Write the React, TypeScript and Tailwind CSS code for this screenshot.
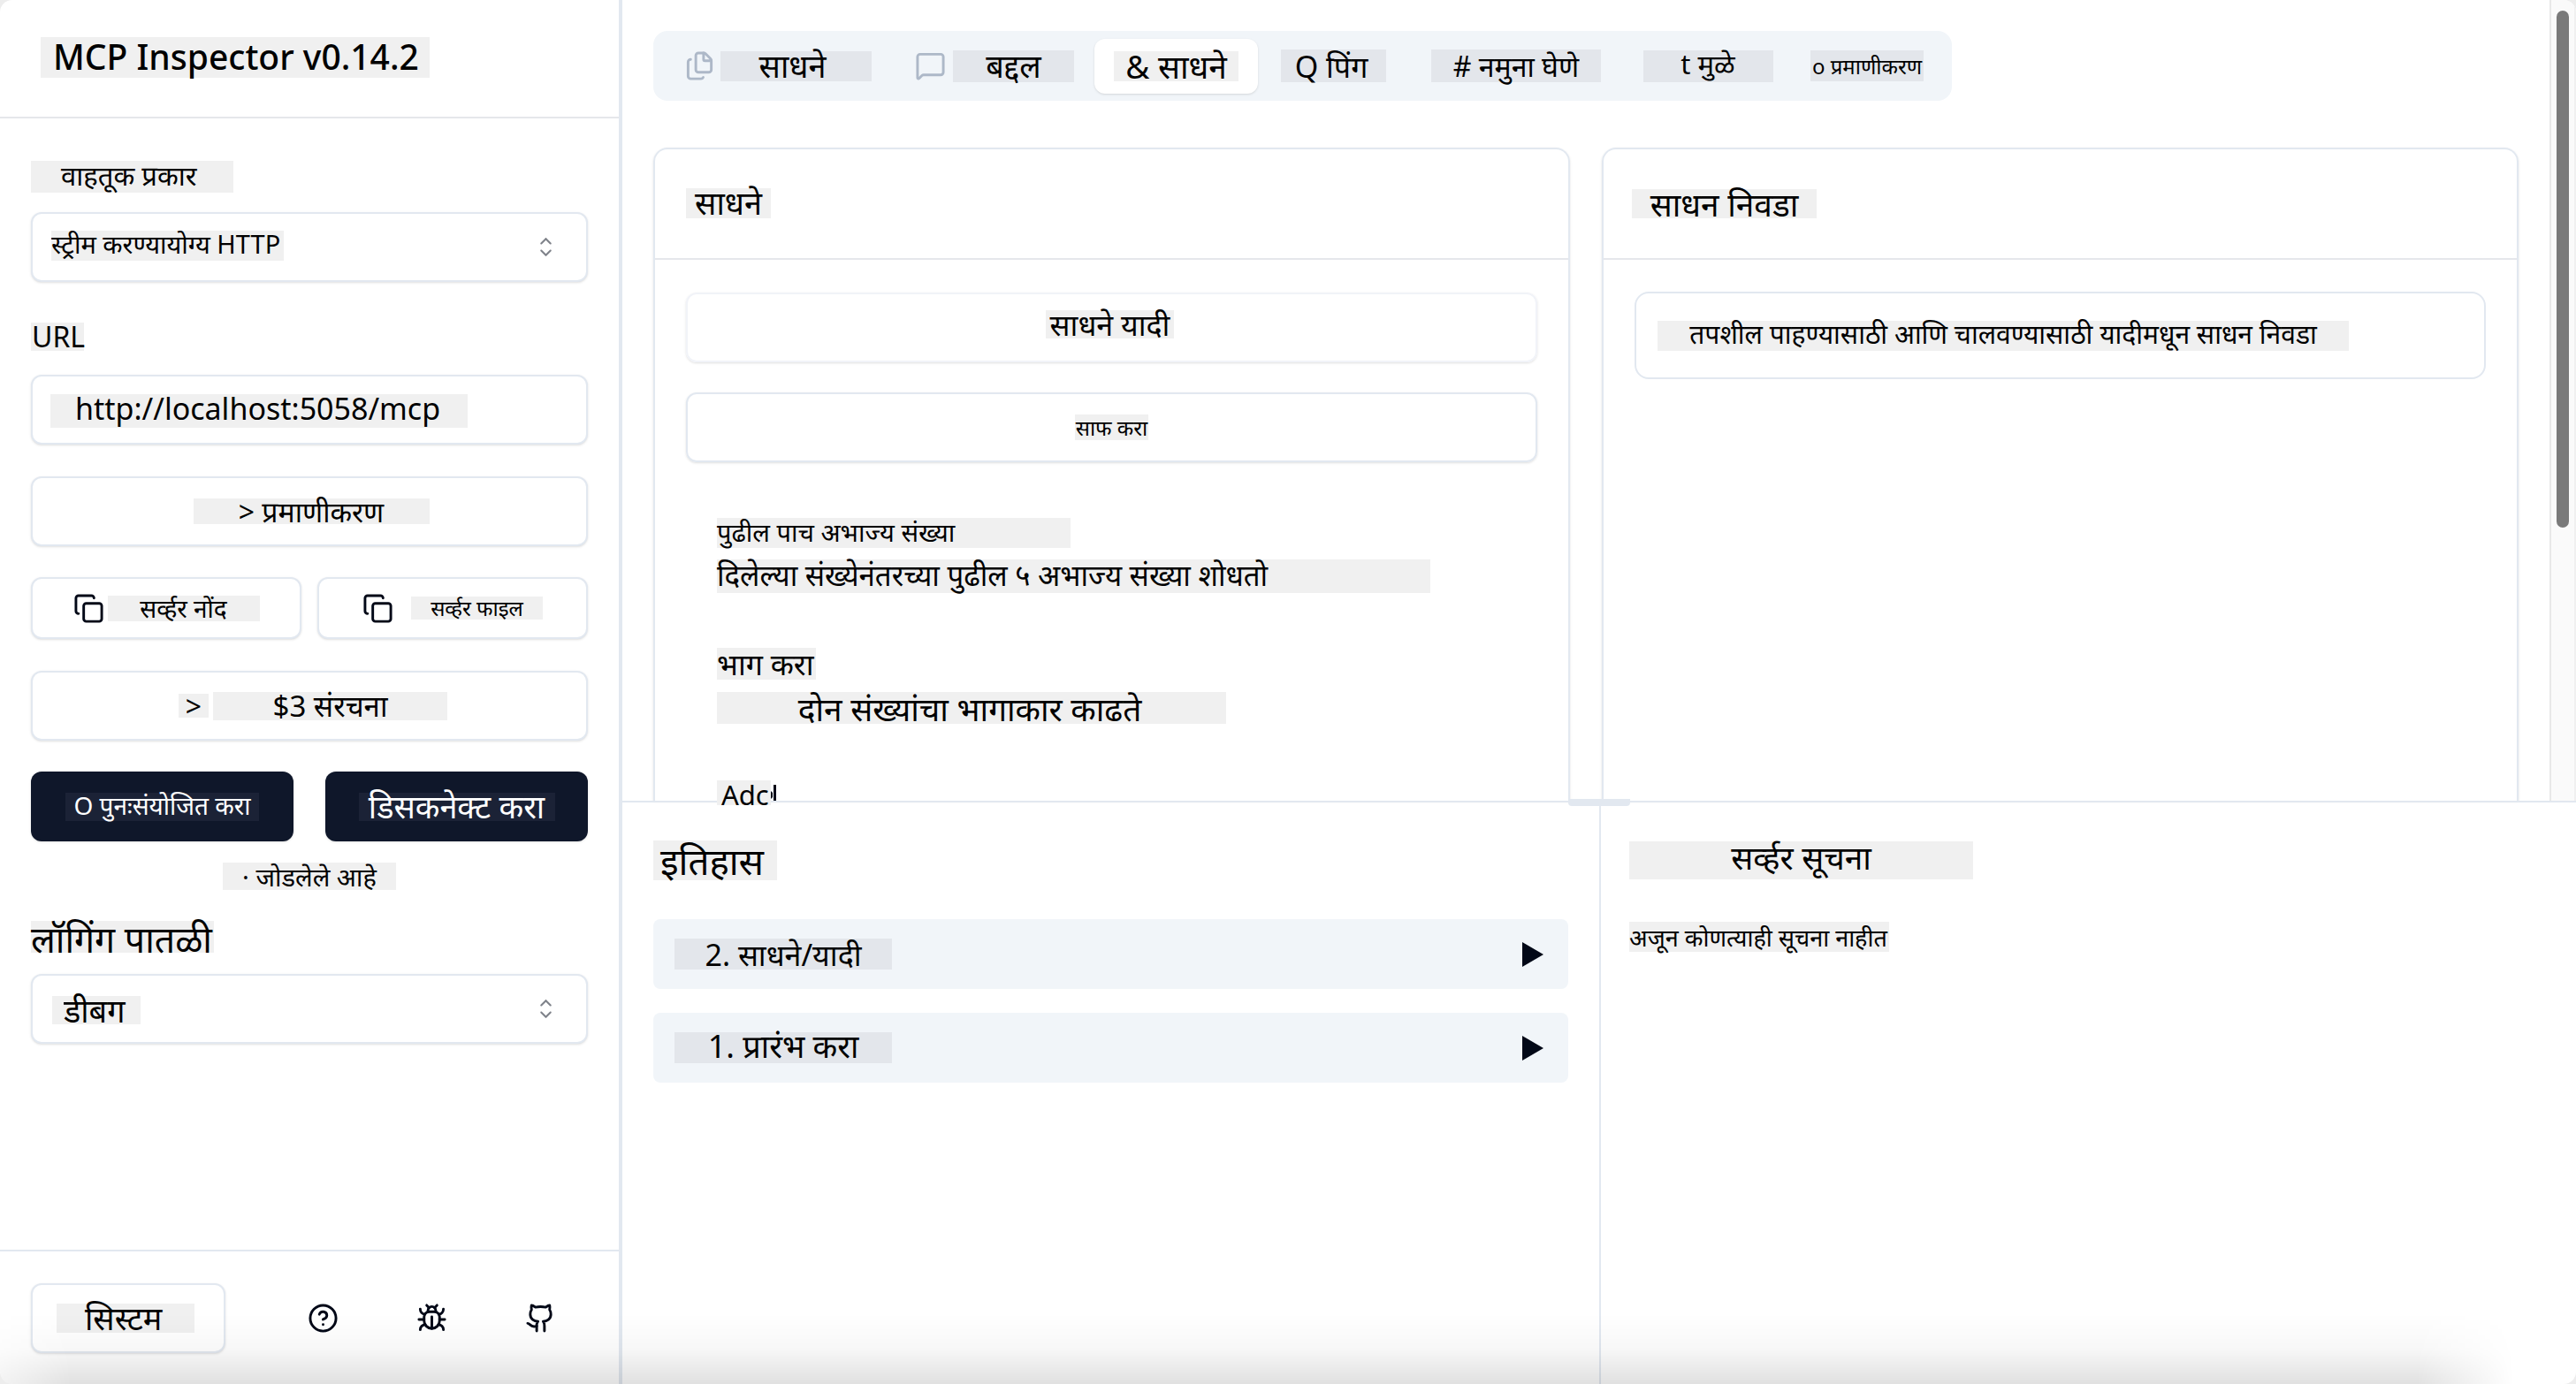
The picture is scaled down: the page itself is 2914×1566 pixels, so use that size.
import type { ReactNode } from "react";
import { CircleQuestionMark, Copy, Files, Github, MessageSquare } from "lucide-react";

function Chip({ className, children }: { className: string; children: ReactNode }) {
  return (
    <span className={`flex shrink-0 items-center whitespace-nowrap leading-none ${className}`}>
      {children}
    </span>
  );
}

function CaretSort() {
  return (
    <svg viewBox="0 0 15 15" className="pointer-events-none size-[35px] shrink-0 fill-[#020817] opacity-50" aria-hidden="true">
      <path d="M4.93179 5.43179C4.75605 5.60753 4.75605 5.89245 4.93179 6.06819C5.10753 6.24392 5.39245 6.24392 5.56819 6.06819L7.49999 4.13638L9.43179 6.06819C9.60753 6.24392 9.89245 6.24392 10.0682 6.06819C10.2439 5.89245 10.2439 5.60753 10.0682 5.43179L7.81819 3.18179C7.73379 3.0974 7.61933 3.04999 7.49999 3.04999C7.38064 3.04999 7.26618 3.0974 7.18179 3.18179L4.93179 5.43179ZM10.0682 9.56819C10.2439 9.39245 10.2439 9.10753 10.0682 8.93179C9.89245 8.75606 9.60753 8.75606 9.43179 8.93179L7.49999 10.8636L5.56819 8.93179C5.39245 8.75606 5.10753 8.75606 4.93179 8.93179C4.75605 9.10753 4.75605 9.39245 4.93179 9.56819L7.18179 11.8182C7.35753 11.9939 7.64245 11.9939 7.81819 11.8182L10.0682 9.56819Z" />
    </svg>
  );
}

function BugIcon() {
  return (
    <svg
      viewBox="0 0 24 24"
      className="size-[35px] fill-none stroke-current stroke-2"
      strokeLinecap="round"
      strokeLinejoin="round"
      aria-hidden="true"
    >
      <path d="m8 2 1.88 1.88" />
      <path d="M14.12 3.88 16 2" />
      <path d="M9 7.13v-1a3.003 3.003 0 1 1 6 0v1" />
      <path d="M12 20c-3.3 0-6-2.7-6-6v-3a4 4 0 0 1 4-4h4a4 4 0 0 1 4 4v3c0 3.3-2.7 6-6 6" />
      <path d="M12 20v-9" />
      <path d="M6.53 9C4.6 8.8 3 7.1 3 5" />
      <path d="M6 13H2" />
      <path d="M3 21c0-2.1 1.7-3.9 3.8-4" />
      <path d="M20.97 5c0 2.1-1.6 3.8-3.5 4" />
      <path d="M22 13h-4" />
      <path d="M17.2 17c2.1.1 3.8 1.9 3.8 4" />
    </svg>
  );
}

function Sidebar() {
  const outline = "rounded-xl border-2 border-[#e2e8f0] bg-white shadow-sm";
  return (
    <aside className="flex w-[704px] shrink-0 flex-col border-r-4 border-[#e2e8f0]">
      <header className="h-[134px] border-b-2 border-gray-200 pt-[42px] pl-[46px]">
        <h1 className="flex">
          <Chip className="h-[46px] w-[440px] bg-[#f0f0f0] pb-1 pl-[14px] text-[39px] font-medium">MCP Inspector v0.14.2</Chip>
        </h1>
      </header>

      <div className="flex flex-1 flex-col px-[35px] pt-12">
        <label htmlFor="transport" className="mb-[22px] flex">
          <Chip className="h-9 w-[229px] bg-[#f0f0f0] pb-1 pl-[34px] text-[31px]">वाहतूक प्रकार</Chip>
        </label>
        <div className={`flex h-[79px] items-center pr-7 ${outline}`}>
          <select
            id="transport"
            className="h-full min-w-0 flex-1 appearance-none bg-[linear-gradient(#f0f0f0,#f0f0f0)] bg-[length:263px_34px] bg-[position:21px_19px] bg-no-repeat pb-2 pl-[21px] text-[29px] text-black outline-none"
          >
            <option>स्ट्रीम करण्यायोग्य HTTP</option>
          </select>
          <CaretSort />
        </div>

        <label htmlFor="url" className="mt-[46px] mb-[27px] flex">
          <Chip className="h-8 w-[60px] bg-[#f0f0f0] pl-px text-[32px]">URL</Chip>
        </label>
        <div className={`flex h-[79px] items-center ${outline}`}>
          <input
            id="url"
            type="text"
            defaultValue="http://localhost:5058/mcp"
            className="h-full w-full bg-[linear-gradient(#f0f0f0,#f0f0f0)] bg-[length:472px_38px] bg-[position:20px_20px] bg-no-repeat pb-1 pl-12 text-[34px] text-black outline-none"
          />
        </div>

        <button type="button" className={`mt-9 flex h-[79px] items-center justify-center pl-1 ${outline}`}>
          <Chip className="h-[29px] w-[267px] justify-center bg-[#f0f0f0] text-[32px]">&gt; प्रमाणीकरण</Chip>
        </button>

        <div className="mt-[35px] grid grid-cols-2 gap-[18px]">
          <button type="button" className={`flex h-[70px] items-center justify-center gap-1 ${outline}`}>
            <Copy className="size-[35px] text-[#020817]" />
            <Chip className="h-[29px] w-[172px] justify-center bg-[#f0f0f0] text-[28px]">सर्व्हर नोंद</Chip>
          </button>
          <button type="button" className={`flex h-[70px] items-center justify-center gap-5 ${outline}`}>
            <Copy className="size-[35px] text-[#020817]" />
            <Chip className="h-[26px] w-[149px] justify-center bg-[#f0f0f0] text-[24px]">सर्व्हर फाइल</Chip>
          </button>
        </div>

        <button type="button" className={`mt-9 flex h-[79px] items-center justify-center gap-[5px] pl-2 ${outline}`}>
          <Chip className="h-[27px] w-[34px] justify-center bg-[#f0f0f0] text-[32px]">&gt;</Chip>
          <Chip className="h-8 w-[265px] justify-center bg-[#f0f0f0] text-[33px]">$3 संरचना</Chip>
        </button>

        <div className="mt-[35px] grid grid-cols-2 gap-9">
          <button type="button" className="flex h-[79px] items-center justify-center rounded-xl bg-[#0f172a] shadow-sm">
            <Chip className="h-8 w-[219px] justify-center bg-[#1b2236] pb-1 text-[28px] text-white">O पुनःसंयोजित करा</Chip>
          </button>
          <button type="button" className="flex h-[79px] items-center justify-center rounded-xl bg-[#0f172a] shadow-sm">
            <Chip className="h-8 w-[222px] justify-center bg-[#1b2236] text-[36px] text-white">डिसकनेक्ट करा</Chip>
          </button>
        </div>

        <p className="mt-6 flex justify-center" role="status">
          <Chip className="h-[31px] w-[196px] justify-center bg-[#f0f0f0] text-[29px]">· जोडलेले आहे</Chip>
        </p>

        <label htmlFor="logging" className="mt-[35px] mb-6 flex">
          <Chip className="h-9 w-[207px] bg-[#f0f0f0] pt-1 text-[41px]">लॉगिंग पातळी</Chip>
        </label>
        <div className={`flex h-[79px] items-center pr-7 ${outline}`}>
          <select
            id="logging"
            className="h-full min-w-0 flex-1 appearance-none bg-[linear-gradient(#f0f0f0,#f0f0f0)] bg-[length:100px_32px] bg-[position:22px_23px] bg-no-repeat pt-1 pl-[35px] text-[36px] text-black outline-none"
          >
            <option>डीबग</option>
          </select>
          <CaretSort />
        </div>
      </div>

      <footer className="flex h-[152px] items-start justify-between border-t-2 border-[#e2e8f0] px-[35px] pt-9">
        <button type="button" className={`flex h-[79px] w-[220px] items-center pl-[27px] ${outline}`}>
          <Chip className="h-[33px] w-[156px] bg-[#f0f0f0] pl-8 text-[36px]">सिस्टम</Chip>
        </button>
        <nav className="flex h-[79px] items-center gap-[88px] pr-9 text-[#020817]">
          <a href="#help" aria-label="Help">
            <CircleQuestionMark className="size-[35px]" />
          </a>
          <a href="#debug" aria-label="Debug">
            <BugIcon />
          </a>
          <a href="#github" aria-label="GitHub">
            <Github className="size-[35px]" />
          </a>
        </nav>
      </footer>
    </aside>
  );
}

function Tabs() {
  const chip = "bg-[#e3e6eb] justify-center";
  return (
    <div role="tablist" className="flex h-[79px] w-[1469px] items-center rounded-2xl bg-[#f1f5f9] px-2">
      <button type="button" role="tab" className="flex h-[62px] w-[265px] items-center gap-[6px] pl-[27px]">
        <Files className="size-[35px] text-[#adb8c8]" />
        <Chip className={`h-[34px] w-[171px] pr-2 text-[36px] ${chip}`}>साधने</Chip>
      </button>
      <button type="button" role="tab" className="flex h-[62px] w-[226px] items-center gap-2 pl-[23px]">
        <MessageSquare className="size-[35px] text-[#adb8c8]" />
        <Chip className={`h-9 w-[137px] text-[36px] ${chip}`}>बद्दल</Chip>
      </button>
      <button type="button" role="tab" aria-selected="true" className="flex h-[62px] w-[185px] items-center justify-center rounded-xl bg-white shadow">
        <Chip className="h-[34px] w-[141px] justify-center bg-[#f0f0f0] text-[37px]">&amp; साधने</Chip>
      </button>
      <button type="button" role="tab" className="flex h-[62px] w-[170px] items-center justify-center">
        <Chip className={`h-[37px] w-[119px] pr-1 text-[34px] ${chip}`}>Q पिंग</Chip>
      </button>
      <button type="button" role="tab" className="flex h-[62px] w-[244px] items-center justify-center">
        <Chip className={`h-[37px] w-[192px] text-[32px] ${chip}`}># नमुना घेणे</Chip>
      </button>
      <button type="button" role="tab" className="flex h-[62px] w-[190px] items-center justify-center">
        <Chip className={`h-9 w-[147px] pb-1 text-[31px] ${chip}`}>t मुळे</Chip>
      </button>
      <button type="button" role="tab" className="flex h-[62px] w-[170px] items-center justify-center">
        <Chip className={`h-[35px] w-32 text-[24px] ${chip}`}>o प्रमाणीकरण</Chip>
      </button>
    </div>
  );
}

function Workspace() {
  return (
    <section className="relative flex min-h-0 flex-1">
      <div className="flex min-w-0 flex-1 flex-col px-[35px] pt-[35px]">
        <Tabs />
        <div className="mt-[53px] grid min-h-0 flex-1 grid-cols-2 gap-9">
          <article className="min-h-0 rounded-t-2xl border-2 border-b-0 border-[#e2e8f0] shadow">
            <header className="h-[125px] border-b-2 border-gray-200 pt-11 pl-[35px]">
              <h2 className="flex">
                <Chip className="h-[34px] w-24 justify-center bg-[#f0f0f0] text-[36px]">साधने</Chip>
              </h2>
            </header>
            <div className="flex flex-col px-[35px] pt-[37px]">
              <button type="button" className="flex h-[79px] items-center justify-center rounded-xl border-2 border-[#f1f3f8] pr-1 pb-2 shadow-sm">
                <Chip className="h-8 w-[145px] justify-center bg-[#f0f0f0] text-[34px]">साधने यादी</Chip>
              </button>
              <button type="button" className="mt-[34px] flex h-[79px] items-center justify-center rounded-xl border-2 border-[#e2e8f0] shadow-sm">
                <Chip className="h-[29px] w-[83px] justify-center bg-[#f0f0f0] text-[24px]">साफ करा</Chip>
              </button>
              <ul className="mt-[63px] flex flex-col px-[35px]">
                <li className="flex h-[147px] flex-col items-start gap-[13px]">
                  <Chip className="h-[34px] w-[400px] bg-[#f0f0f0] pb-1 text-[29px]">पुढील पाच अभाज्य संख्या</Chip>
                  <Chip className="h-[38px] w-[807px] bg-[#f0f0f0] pb-1 text-[33px]">दिलेल्या संख्येनंतरच्या पुढील ५ अभाज्य संख्या शोधतो</Chip>
                </li>
                <li className="flex h-[150px] flex-col items-start gap-[14px]">
                  <Chip className="h-9 w-28 bg-[#f0f0f0] text-[34px]">भाग करा</Chip>
                  <Chip className="h-9 w-[576px] justify-center bg-[#f0f0f0] pr-1 text-[37px]">दोन संख्यांचा भागाकार काढते</Chip>
                </li>
                <li className="relative z-10 flex">
                  <Chip className="h-7 w-[61px] bg-[#f0f0f0] pt-1 pl-[5px] text-[31px]">Adc</Chip>
                  <svg viewBox="0 0 6 27" className="h-[27px] w-[6px] fill-[#020817]" aria-hidden="true">
                    <path d="M3 5H6V23H3ZM0 12 2 14V19L0 21Z" />
                  </svg>
                </li>
              </ul>
            </div>
          </article>

          <article className="min-h-0 rounded-t-2xl border-2 border-b-0 border-[#e2e8f0] shadow">
            <header className="h-[125px] border-b-2 border-gray-200 pt-[45px] pl-8">
              <h2 className="flex">
                <Chip className="h-[33px] w-[209px] justify-center bg-[#f0f0f0] text-[37px]">साधन निवडा</Chip>
              </h2>
            </header>
            <div className="px-[35px] pt-9">
              <div role="note" className="flex h-[99px] items-center rounded-2xl border-2 border-[#e2e8f0] pl-6">
                <Chip className="h-[34px] w-[782px] justify-center bg-[#f0f0f0] pb-1 text-[30px]">
                  तपशील पाहण्यासाठी आणि चालवण्यासाठी यादीमधून साधन निवडा
                </Chip>
              </div>
            </div>
          </article>
        </div>
      </div>
      <div className="w-[30px] shrink-0 border-r-2 border-l-2 border-r-[#f0f0f0] border-l-[#e8e8e8] bg-[#fafafa] pt-3 pl-[6px]">
        <div className="h-[585px] w-[14px] rounded-full bg-[#7a7a7a]" />
      </div>
    </section>
  );
}

function HistoryRow({ children }: { children: ReactNode }) {
  return (
    <li>
      <button type="button" className="flex h-[79px] w-full items-center justify-between rounded-lg bg-[#f1f5f9] pr-7 pl-6">
        {children}
        <svg viewBox="0 0 24 28" className="h-7 w-6 fill-[#020817]" aria-hidden="true">
          <path d="M0 0 24 14 0 28Z" />
        </svg>
      </button>
    </li>
  );
}

function BottomPane() {
  return (
    <section className="relative flex h-[660px] shrink-0 border-t-2 border-[#e2e8f0]">
      <div className="absolute -top-1 left-1/2 h-2 w-[70px] -translate-x-1/2 rounded-b bg-[#e2e8f0]" />
      <div className="w-1/2 px-[35px] pt-[43px]">
        <h2 className="flex">
          <Chip className="h-[45px] w-[140px] bg-[#f0f0f0] pl-2 text-[42px]">इतिहास</Chip>
        </h2>
        <ul className="mt-11 flex flex-col gap-[27px]">
          <HistoryRow>
            <Chip className="h-[35px] w-[246px] justify-center bg-[#e3e6eb] text-[34px]">2. साधने/यादी</Chip>
          </HistoryRow>
          <HistoryRow>
            <Chip className="h-[35px] w-[246px] justify-center bg-[#e3e6eb] pb-1 text-[36px]">1. प्रारंभ करा</Chip>
          </HistoryRow>
        </ul>
      </div>
      <div className="w-1/2 border-l-2 border-[#e2e8f0] px-8 pt-11">
        <h2 className="flex">
          <Chip className="h-[43px] w-[389px] justify-center bg-[#f0f0f0] pb-2 text-[37px]">सर्व्हर सूचना</Chip>
        </h2>
        <p className="mt-[48px] flex">
          <Chip className="h-[34px] w-[294px] bg-[#f0f0f0] text-[27px]">अजून कोणत्याही सूचना नाहीत</Chip>
        </p>
      </div>
    </section>
  );
}

export default function App() {
  return (
    <div className="h-screen bg-[#ededed] font-['Noto_Sans','Noto_Sans_Devanagari',sans-serif] text-black">
      <div className="relative flex h-full overflow-hidden rounded-[14px] bg-white">
        <Sidebar />
        <main className="flex min-w-0 flex-1 flex-col">
          <Workspace />
          <BottomPane />
        </main>
        <div className="pointer-events-none absolute inset-x-0 bottom-0 z-20 h-20 bg-linear-to-b from-transparent via-black/3 to-black/12 [mask-image:linear-gradient(to_right,rgba(0,0,0,0.4),black_80px,black_calc(100%-180px),transparent_calc(100%-70px))]" />
      </div>
    </div>
  );
}
